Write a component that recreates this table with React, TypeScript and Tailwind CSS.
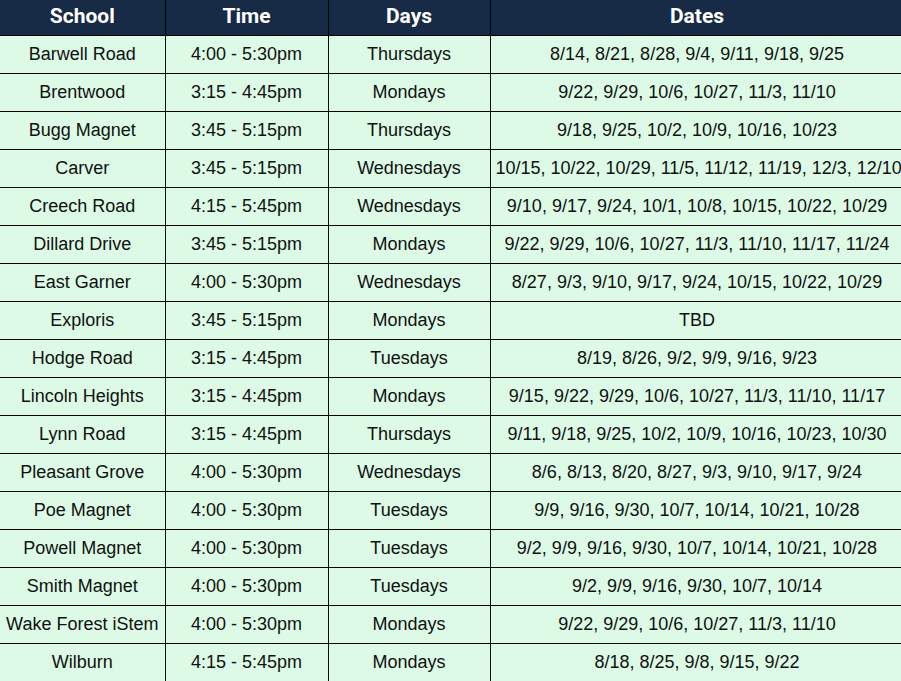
import React from 'react';

type Row = { school: string; time: string; days: string; dates: string };

const rows: Row[] = [
  { school: 'Barwell Road', time: '4:00 - 5:30pm', days: 'Thursdays', dates: '8/14, 8/21, 8/28, 9/4, 9/11, 9/18, 9/25' },
  { school: 'Brentwood', time: '3:15 - 4:45pm', days: 'Mondays', dates: '9/22, 9/29, 10/6, 10/27, 11/3, 11/10' },
  { school: 'Bugg Magnet', time: '3:45 - 5:15pm', days: 'Thursdays', dates: '9/18, 9/25, 10/2, 10/9, 10/16, 10/23' },
  { school: 'Carver', time: '3:45 - 5:15pm', days: 'Wednesdays', dates: '10/15, 10/22, 10/29, 11/5, 11/12, 11/19, 12/3, 12/10' },
  { school: 'Creech Road', time: '4:15 - 5:45pm', days: 'Wednesdays', dates: '9/10, 9/17, 9/24, 10/1, 10/8, 10/15, 10/22, 10/29' },
  { school: 'Dillard Drive', time: '3:45 - 5:15pm', days: 'Mondays', dates: '9/22, 9/29, 10/6, 10/27, 11/3, 11/10, 11/17, 11/24' },
  { school: 'East Garner', time: '4:00 - 5:30pm', days: 'Wednesdays', dates: '8/27, 9/3, 9/10, 9/17, 9/24, 10/15, 10/22, 10/29' },
  { school: 'Exploris', time: '3:45 - 5:15pm', days: 'Mondays', dates: 'TBD' },
  { school: 'Hodge Road', time: '3:15 - 4:45pm', days: 'Tuesdays', dates: '8/19, 8/26, 9/2, 9/9, 9/16, 9/23' },
  { school: 'Lincoln Heights', time: '3:15 - 4:45pm', days: 'Mondays', dates: '9/15, 9/22, 9/29, 10/6, 10/27, 11/3, 11/10, 11/17' },
  { school: 'Lynn Road', time: '3:15 - 4:45pm', days: 'Thursdays', dates: '9/11, 9/18, 9/25, 10/2, 10/9, 10/16, 10/23, 10/30' },
  { school: 'Pleasant Grove', time: '4:00 - 5:30pm', days: 'Wednesdays', dates: '8/6, 8/13, 8/20, 8/27, 9/3, 9/10, 9/17, 9/24' },
  { school: 'Poe Magnet', time: '4:00 - 5:30pm', days: 'Tuesdays', dates: '9/9, 9/16, 9/30, 10/7, 10/14, 10/21, 10/28' },
  { school: 'Powell Magnet', time: '4:00 - 5:30pm', days: 'Tuesdays', dates: '9/2, 9/9, 9/16, 9/30, 10/7, 10/14, 10/21, 10/28' },
  { school: 'Smith Magnet', time: '4:00 - 5:30pm', days: 'Tuesdays', dates: '9/2, 9/9, 9/16, 9/30, 10/7, 10/14' },
  { school: 'Wake Forest iStem', time: '4:00 - 5:30pm', days: 'Mondays', dates: '9/22, 9/29, 10/6, 10/27, 11/3, 11/10' },
  { school: 'Wilburn', time: '4:15 - 5:45pm', days: 'Mondays', dates: '8/18, 8/25, 9/8, 9/15, 9/22' },
];

const th = 'h-[35px] border-r border-b border-black bg-[#172a46] text-white font-bold text-[21px] text-center px-0 pt-0 pb-[2px]';
const td = 'h-[38px] border-r border-b border-black bg-[#dcfae6] text-[#111] text-[18px] text-center px-[5px] py-0 whitespace-nowrap';

export default function App() {
  return (
    <div className="w-[901px] h-[681px] overflow-hidden bg-white">
      <table
        className="border-collapse table-fixed w-[904px]"
        style={{ fontFamily: '"Liberation Sans", Arial, sans-serif' }}
      >
        <colgroup>
          <col className="w-[165px]" />
          <col className="w-[163px]" />
          <col className="w-[162px]" />
          <col className="w-[414px]" />
        </colgroup>
        <thead>
          <tr>
            {['School', 'Time', 'Days', 'Dates'].map((h) => (
              <th key={h} className={th} style={{ fontFamily: 'Roboto, "Liberation Sans", sans-serif' }}>
                {h}
              </th>
            ))}
          </tr>
        </thead>
        <tbody>
          {rows.map((r) => (
            <tr key={r.school}>
              <td className={td}>{r.school}</td>
              <td className={td}>{r.time}</td>
              <td className={td}>{r.days}</td>
              <td className={td}>{r.dates}</td>
            </tr>
          ))}
        </tbody>
      </table>
    </div>
  );
}
